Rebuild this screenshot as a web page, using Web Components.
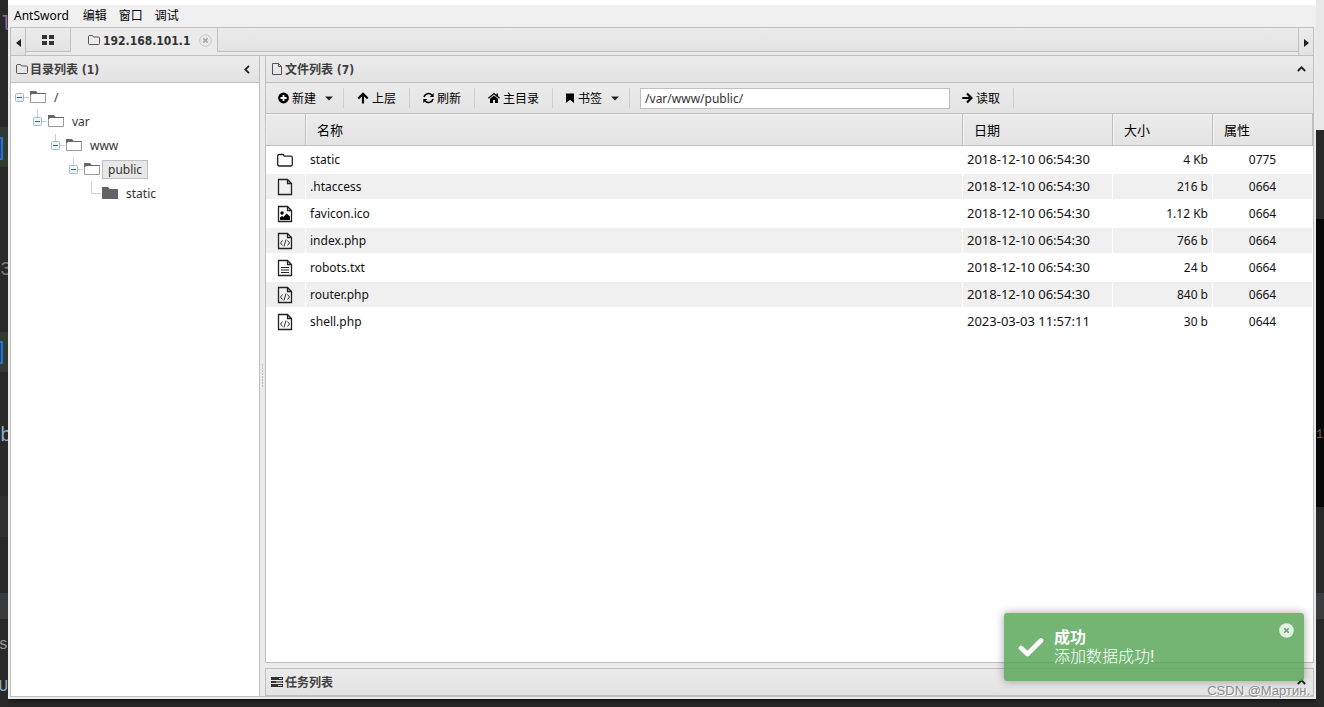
<!DOCTYPE html>
<html lang="zh-CN">
<head>
<meta charset="utf-8">
<title>AntSword</title>
<style>
html, body { margin: 0; height: 100%; }
body {
  --line: #bfbfbf;
  --bar: linear-gradient(#ebebeb, #e3e3e3);
  font: 12px/18px "Noto Sans", "Noto Sans CJK SC", sans-serif;
  color: #111;
  background: #282828;
  overflow: hidden;
}
</style>
</head>
<body>
<as-desktop>
  <as-backdrop slot="left" side="left"></as-backdrop>
  <as-window>
    <as-menu slot="menu"></as-menu>
    <as-tabs slot="tabs" address="192.168.101.1"></as-tabs>
    <as-panel slot="side" icon="folderThin" heading="目录列表 (1)" control="left">
      <as-tree></as-tree>
    </as-panel>
    <as-panel slot="main" icon="fileThin" heading="文件列表 (7)" control="up">
      <as-toolbar path="/var/www/public/"></as-toolbar>
      <as-files></as-files>
    </as-panel>
    <as-panel slot="tasks" icon="tasks" heading="任务列表" control="up"></as-panel>
  </as-window>
  <as-backdrop slot="right" side="right"></as-backdrop>
  <as-toast slot="over" heading="成功">添加数据成功!</as-toast>
  <as-mark slot="over">CSDN @Мартин.</as-mark>
</as-desktop>

<script>
const define = (name, render) => customElements.define(name, class extends HTMLElement {
  constructor() {
    super();
    this.attachShadow({ mode: 'open' });
  }
  connectedCallback() {
    const t = document.createElement('template');
    t.innerHTML = render(this);
    this.shadowRoot.replaceChildren(t.content.cloneNode(true));
  }
});

const page = '<path d="M1.500 1.500h9l4 4v11h-13zM10.500 1.500v4h4" fill="none" stroke="#222" stroke-width="1.300"/>';
const icons = {
  folderThin: [12, 12, '<path d="M.5 3q0-1.500 1-1.500h3l1 1.500h5q1 0 1 1v5.500q0 1-1 1h-9q-1 0-1-1z" fill="none" stroke="#555"/>'],
  fileThin: [12, 12, '<path d="M1.500.5h6l3 3v8h-9zM7.500.5v3h3" fill="none" stroke="#555"/>'],
  tasks: [12, 12, '<path d="M0 1h12v3H0zM0 5h12v2H0zM0 8h12v3H0z" fill="#333"/><path d="M8 2h3v1H8zM5 5.500h6v1H5zM7 9h4v1H7z" fill="#ccc"/>'],
  grid: [12, 12, '<path d="M0 1h5v4H0zM7 1h5v4H7zM0 7h5v4H0zM7 7h5v4H7z" fill="#333"/>'],
  close: [13, 13, '<circle cx="6.500" cy="6.500" r="5.800" fill="none" stroke="#c4c4c4"/><path d="M4.300 4.300l4.400 4.400M8.700 4.300L4.300 8.700" stroke="#aaa" stroke-width="1.800"/>'],
  triLeft: [5, 8, '<path d="M5 0v8L0 4z" fill="#222"/>'],
  triRight: [5, 8, '<path d="M0 0v8l5-4z" fill="#222"/>'],
  left: [9, 9, '<path d="M6 .8L2.300 4.500 6 8.200" fill="none" stroke="#222" stroke-width="1.800"/>'],
  up: [9, 6, '<path d="M.8 5l3.700-3.700L8.200 5" fill="none" stroke="#222" stroke-width="1.800"/>'],
  caret: [8, 5, '<path d="M0 .5h8L4 4.500z" fill="#222"/>'],
  plus: [11, 12, '<circle cx="5.500" cy="6" r="5.400"/><path d="M5.500 3v6M2.500 6h6" stroke="#fff" stroke-width="1.800"/>'],
  arrowUp: [12, 12, '<path d="M6 11.500V2.500M1.300 6.500L6 1.800l4.700 4.700" fill="none" stroke="#000" stroke-width="2.200"/>'],
  arrowRight: [11, 12, '<path d="M.3 6H9M5 1.500L9.500 6 5 10.500" fill="none" stroke="#000" stroke-width="2.200"/>'],
  refresh: [11, 12, '<path d="M1 5a4.500 4.500 0 0 1 7.800-1.900M10 7a4.500 4.500 0 0 1-7.800 1.900" fill="none" stroke="#000" stroke-width="1.500"/><path d="M10.700 1v4H6.700zM.3 11V7h4z"/>'],
  home: [12, 12, '<path d="M.4 6.200L6 1.500l5.600 4.700" fill="none" stroke="#000" stroke-width="1.300"/><path d="M8.500 1.500H10v3H8.500zM2 6.700L6 3.400l4 3.300V11H7V8H5v3H2z"/>'],
  bookmark: [10, 12, '<path d="M1 1.500h8V11L5 7.800 1 11z"/>'],
  folder: [16, 18, '<path d="M.7 5q0-1.500 1.500-1.500h3.300q1 0 1.300.8l.4.900h6.500q1.600 0 1.600 1.500v6.600q0 1.700-1.600 1.700H2.300q-1.600 0-1.600-1.700z" fill="none" stroke="#222" stroke-width="1.300"/>'],
  file: [16, 18, page],
  image: [16, 18, page + '<circle cx="5" cy="8" r="1.700"/><path d="M3 15v-2.500l2-1.500 1.500 1 3-3.500 3.500 3V15z"/>'],
  code: [16, 18, page + '<path d="M5.500 8.500L3.500 11l2 2.500M10.500 8.500l2 2.500-2 2.500M9 7.500l-2 7" fill="none" stroke="#333"/>'],
  text: [16, 18, page + '<path d="M4 8.500h8M4 11h8M4 13.500h8" stroke="#222" stroke-width="1.200"/>'],
  treeOpen: [16, 12, '<path d="M.5 3.500v8h15v-8z" fill="#fff" stroke="#999"/><path d="M0 4V0h6l1.500 2H16v2z" fill="#666"/><path d="M1.500 3.500h14" stroke="#fff"/>'],
  treeShut: [16, 12, '<path d="M0 12V0h6l1.500 2H16v10z" fill="#636363"/>'],
  check: [26, 20, '<path d="M3 11l6.500 6L23 3.500" fill="none" stroke="#fff" stroke-width="4.600" stroke-linecap="round" stroke-linejoin="round"/>'],
  toastClose: [15, 15, '<circle cx="7.500" cy="7.500" r="7.300" fill="#fff" opacity=".8"/><path d="M5.200 5.200l4.600 4.600M9.800 5.200L5.200 9.800" stroke="#5fa65f" stroke-width="1.500"/>']
};

define('as-icon', el => {
  const [w, h, art] = icons[el.getAttribute('name')];
  return `<style>:host{display:block;flex:none}svg{display:block}</style>
    <svg width="${w}" height="${h}" viewBox="0 0 ${w} ${h}" aria-hidden="true">${art}</svg>`;
});

define('as-desktop', () => `<style>
  :host { display: grid; grid-template-columns: 8px minmax(0, 1fr) 8px; height: 100vh; position: relative; }
  main { display: grid; min-height: 0; padding-bottom: 8px; }
</style>
<slot name="left"></slot><main><slot></slot></main><slot name="right"></slot><slot name="over"></slot>`);

/* Strips of the editor that stays visible behind the window: [height, fill, glyph, colour, centre, size] */
define('as-backdrop', el => {
  const left = el.getAttribute('side') === 'left';
  const bands = left
    ? [[127, '#282828', 'l', '#8a6a9c', 25, 20], [40, '#303a30', ']', '#2672d8', 149, 24], [165, '#282828', '3', '#777', 270, 20], [40, '#303a30', ']', '#2672d8', 353, 24],
       [124, '#282828', 'b', '#8fa9c0', 436, 20], [41, '#303030'], [56, '#282828'], [26, '#393b3d'], [48, '#282828', 's', '#999', 645, 16], [40, '#282828', 'U', '#8fa9c0', 687, 16]]
    : [[130, '#e8e8e8'], [89, '#282828'], [288, '#080808', '1', '#7a5a48', 435, 12], [86, '#282828'], [26, '#393b3d'], [88, '#282828']];
  let top = 0;
  return `<style>
    :host { display: block; overflow: hidden; min-height: 0; }
    div { position: relative; }
    span { position: absolute; font-family: "Liberation Mono", monospace; line-height: 24px; left: 0; }
    .edge { left: auto; right: 0; }
  </style>` + bands.map(([h, bg, ch, color, y, size]) => {
    const edge = ch === ']' || ch === 'U' || ch === 's';
    const html = `<div style="height:${h}px;background:${bg}">${ch ? `<span class="${edge ? 'edge' : ''}" aria-hidden="true" style="color:${color};top:${y - top - 12}px;font-size:${size}px">${ch}</span>` : ''}</div>`;
    top += h;
    return html;
  }).join('');
});

define('as-window', () => `<style>
  :host { display: flex; flex-direction: column; min-height: 0; background: #ebebeb; border-top: 5px solid #fff; box-sizing: border-box; padding: 0 2px 2px; box-shadow: 0 0 6px #000; }
  section { flex: 1; min-height: 0; display: grid; grid-template-columns: 250px 5px minmax(0, 1fr); border-bottom: 1px solid var(--line); }
  .split { display: grid; place-content: center; }
  .split i { width: 1px; height: 24px; background: repeating-linear-gradient(#bbb 0 2px, transparent 2px 3px); }
  .right { display: flex; flex-direction: column; gap: 5px; min-height: 0; }
  ::slotted([slot=main]) { flex: 1; min-height: 0; border-bottom: 1px solid var(--line); }
  ::slotted([slot=tasks]) { border-top: 1px solid var(--line); height: 28px; }
</style>
<slot name="menu"></slot><slot name="tabs"></slot>
<section><slot name="side"></slot><div class="split"><i></i></div><div class="right"><slot name="main"></slot><slot name="tasks"></slot></div></section>`);

define('as-menu', () => `<style>
  :host { display: block; background: #f0f0f0; margin: 0 -2px; }
  nav { display: flex; gap: 12px; height: 22px; padding-left: 6px; }
  button { border: 0; background: none; padding: 0; font: inherit; line-height: 20px; color: #000; }
  button:first-child { padding-right: 2px; }
</style>
<nav><button>AntSword</button><button>编辑</button><button>窗口</button><button>调试</button></nav>`);

define('as-tabs', el => `<style>
  :host { display: flex; height: 27px; border: 1px solid var(--line); background: #ebebeb; }
  button { border: 0; padding: 0; background: var(--bar); display: grid; place-items: center; }
  .arrow { width: 15px; padding-top: 3px; }
  .arrow:first-of-type { border-right: 1px solid var(--line); }
  .arrow:last-of-type { border-left: 1px solid var(--line); }
  .strip { flex: 1; display: flex; height: 23px; border-bottom: 1px solid var(--line); background: var(--bar); }
  .home { width: 45px; border-right: 1px solid var(--line); }
  .tab { display: flex; align-items: center; height: 24px; width: 147px; box-sizing: border-box; padding: 0 5px 0 17px; gap: 3px; border-right: 1px solid var(--line); background: #ebebeb; font: bold 12px/24px "DejaVu Sans Condensed", sans-serif; color: #333; }
  .tab span { line-height: 20px; padding-top: 2px; }
  .tab button { margin-left: auto; background: none; }
</style>
<button class="arrow" aria-label="上一个"><as-icon name="triLeft"></as-icon></button>
<div class="strip"><button class="home" aria-label="首页"><as-icon name="grid"></as-icon></button>
<div class="tab"><as-icon name="folderThin"></as-icon><span>${el.getAttribute('address')}</span><button aria-label="关闭"><as-icon name="close"></as-icon></button></div></div>
<button class="arrow" aria-label="下一个"><as-icon name="triRight"></as-icon></button>`);

define('as-panel', el => `<style>
  :host { display: flex; flex-direction: column; box-sizing: border-box; min-height: 0; border: solid var(--line); border-width: 0 1px; background: #fff; }
  header { flex: none; display: flex; align-items: center; gap: 2px; height: 26px; padding: 0 7px 0 5px; background: var(--bar); border-bottom: 1px solid var(--line); }
  h2 { margin: 0; padding-top: 2px; font: bold 12px/22px "DejaVu Sans Condensed", "Noto Sans CJK SC", sans-serif; color: #404040; }
  button { border: 0; padding: 0; background: none; margin-left: auto; }
</style>
<header><as-icon name="${el.getAttribute('icon')}"></as-icon><h2>${el.getAttribute('heading')}</h2>
<button aria-label="折叠"><as-icon name="${el.getAttribute('control')}"></as-icon></button></header><slot></slot>`);

define('as-tree', () => {
  const nodes = ['/', 'var', 'www', 'public', 'static'];
  const joint = i => {
    if (i === 4) return '<path d="M8.500 0v11.500H18" fill="none" stroke="#ccc"/>';
    return `<path d="${i ? 'M8.500 0v8' : ''}M13 11.500h5" fill="none" stroke="#ccc"/>
      <rect x="4.500" y="7.500" width="8" height="8" rx="1" fill="#eef5f8" stroke="#a9b9c2"/><path d="M6 11.500h5" stroke="#44606e"/>`;
  };
  return `<style>
    :host { display: block; }
    ul { list-style: none; margin: 0; padding: 3px 0 0; }
    li { display: flex; align-items: center; height: 22px; padding-bottom: 2px; }
    svg { flex: none; margin-right: 1px; }
    span { margin-left: 2px; border: 1px solid transparent; padding: 0 5px; line-height: 17px; color: #333; }
    .on { border-color: #bfbfbf; background: #e8e8e8; }
  </style><ul role="tree">` + nodes.map((n, i) => `<li role="treeitem" aria-level="${i + 1}" style="padding-left:${i * 18}px">
    <svg width="18" height="22">${joint(i)}</svg><as-icon name="${i === 4 ? 'treeShut' : 'treeOpen'}"></as-icon>
    <span class="${n === 'public' ? 'on' : ''}">${n}</span></li>`).join('') + '</ul>';
});

define('as-toolbar', el => {
  const b = (icon, label, drop) => `<button class="${drop ? 'drop' : ''}"><as-icon name="${icon}"></as-icon>${label}${drop ? '<as-icon class="caret" name="caret"></as-icon>' : ''}</button><i></i>`;
  return `<style>
    :host { display: flex; align-items: center; flex: none; height: 30px; background: var(--bar); border-bottom: 1px solid var(--line); }
    button { display: flex; align-items: center; gap: 3px; border: 0; background: none; padding: 0 13px; font: 12px/20px "Noto Sans CJK SC", sans-serif; color: #000; white-space: nowrap; }
    .drop { padding: 0 10px 0 12px; }
    .caret { margin-left: 6px; }
    i { width: 1px; height: 20px; background: #c5d3d9; }
    input { width: 310px; height: 21px; box-sizing: border-box; margin: 0 0 0 10px; border: 1px solid var(--line); padding: 0 4px; font: inherit; color: #333; background: #fff; }
    input + button { padding: 0 13px 0 12px; }
  </style>` + b('plus', '新建', 1) + b('arrowUp', '上层') + b('refresh', '刷新') + b('home', '主目录') + b('bookmark', '书签', 1)
    + `<input aria-label="路径" value="${el.getAttribute('path')}">` + b('arrowRight', '读取');
});

define('as-files', () => {
  const date = '2018-12-10 06:54:30';
  const rows = [
    ['folder', 'static', date, '4 Kb', '0775'],
    ['file', '.htaccess', date, '216 b', '0664'],
    ['image', 'favicon.ico', date, '1.12 Kb', '0664'],
    ['code', 'index.php', date, '766 b', '0664'],
    ['text', 'robots.txt', date, '24 b', '0664'],
    ['code', 'router.php', date, '840 b', '0664'],
    ['code', 'shell.php', '2023-03-03 11:57:11', '30 b', '0644']
  ];
  return `<style>
    :host { display: block; }
    table { width: 100%; table-layout: fixed; border-collapse: separate; border-spacing: 0; }
    th { box-sizing: border-box; height: 32px; padding: 0 11px; text-align: left; font: 13px/20px "Noto Sans CJK SC", sans-serif; color: #000; background: var(--bar); border: solid var(--line); border-width: 0 1px 1px 0; box-shadow: inset 1px 1px #f3f3f3; }
    td { box-sizing: border-box; height: 27px; padding: 0 4px; border: solid #fff; border-width: 1px 1px 1px 0; white-space: nowrap; }
    tr:nth-child(even) td { background: #f0f0f0; }
    td:first-child { padding-left: 11px; }
    .date { font-size: 13px; padding-bottom: 2px; }
    .size { text-align: right; }
    .mode { text-align: center; }
    .i { width: 40px; } .d { width: 150px; } .s { width: 100px; }
  </style>
  <table><colgroup><col class="i"><col><col class="d"><col class="s"><col class="s"></colgroup>
  <thead><tr><th></th><th>名称</th><th>日期</th><th>大小</th><th>属性</th></tr></thead><tbody>`
  + rows.map(([icon, name, when, size, mode]) => `<tr><td><as-icon name="${icon}"></as-icon></td><td>${name}</td><td class="date">${when}</td><td class="size">${size}</td><td class="mode">${mode}</td></tr>`).join('')
  + '</tbody></table>';
});

define('as-toast', el => `<style>
  :host { position: absolute; right: 20px; bottom: 26px; width: 300px; height: 68px; box-sizing: border-box; padding: 15px 10px 15px 14px; display: flex; gap: 10px; border-radius: 3px; background: rgba(81, 163, 81, .8); box-shadow: 0 0 10px rgba(0, 0, 0, .35); color: #fff; font: 16px/19px "Liberation Sans", "Noto Sans CJK SC", sans-serif; }
  .tick { margin-top: 9px; }
  strong { display: block; }
  p { margin: 0; font-weight: 300; }
  button { border: 0; padding: 0; background: none; margin: -5px 0 auto auto; }
</style>
<as-icon class="tick" name="check"></as-icon><div role="status"><strong>${el.getAttribute('heading')}</strong><p><slot></slot></p></div>
<button aria-label="关闭"><as-icon name="toastClose"></as-icon></button>`);

define('as-mark', () => `<style>
  :host { position: absolute; right: 14px; bottom: 8px; font: 13px/16px "Liberation Sans", sans-serif; color: #8a8a8a; text-shadow: 1px 1px #fff; }
</style><slot></slot>`);
</script>
</body>
</html>
